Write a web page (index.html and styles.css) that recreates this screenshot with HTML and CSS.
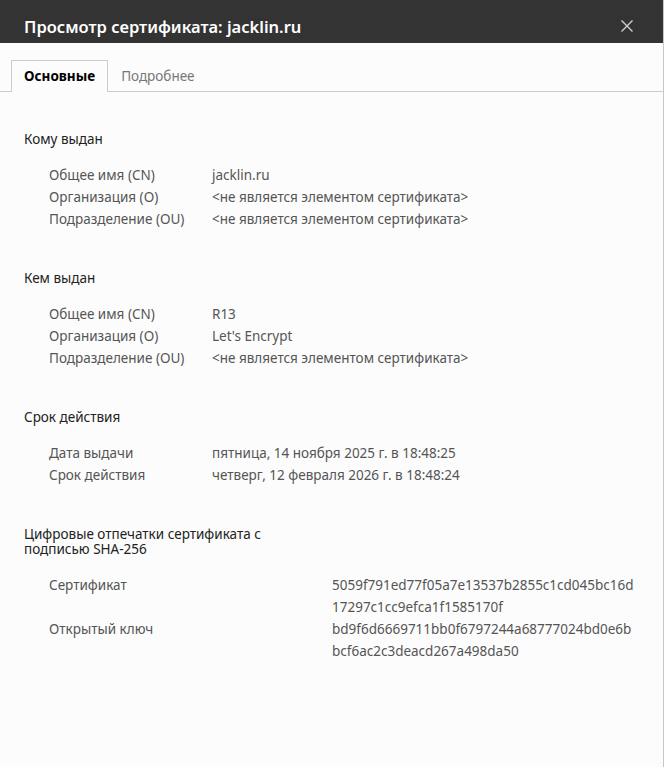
FILE: index.html
```html
<!DOCTYPE html>
<html lang="ru">
<head>
  <meta charset="UTF-8">
  <title>Просмотр сертификата</title>
  <link rel="stylesheet" href="styles.css">
</head>
<body>
  <div class="dialog">
    <div class="titlebar">
      <h1>Просмотр сертификата: jacklin.ru</h1>
      <button class="close" aria-label="Закрыть">
        <svg width="12" height="12" viewBox="0 0 12 12"><path d="M0.5 0.5L11.5 11.5M11.5 0.5L0.5 11.5" stroke="#d0d0d0" stroke-width="1.4" fill="none"/></svg>
      </button>
    </div>
    <div class="tabs">
      <div class="tab active">Основные</div>
      <div class="tab">Подробнее</div>
    </div>
    <div class="content">
      <div class="section">
        <h2>Кому выдан</h2>
        <div class="rows">
          <div class="label">Общее имя (CN)</div><div class="value">jacklin.ru</div>
          <div class="label">Организация (O)</div><div class="value">&lt;не является элементом сертификата&gt;</div>
          <div class="label">Подразделение (OU)</div><div class="value">&lt;не является элементом сертификата&gt;</div>
        </div>
      </div>
      <div class="section">
        <h2>Кем выдан</h2>
        <div class="rows">
          <div class="label">Общее имя (CN)</div><div class="value">R13</div>
          <div class="label">Организация (O)</div><div class="value">Let's Encrypt</div>
          <div class="label">Подразделение (OU)</div><div class="value">&lt;не является элементом сертификата&gt;</div>
        </div>
      </div>
      <div class="section">
        <h2>Срок действия</h2>
        <div class="rows">
          <div class="label">Дата выдачи</div><div class="value">пятница, 14 ноября 2025 г. в 18:48:25</div>
          <div class="label">Срок действия</div><div class="value">четверг, 12 февраля 2026 г. в 18:48:24</div>
        </div>
      </div>
      <div class="section">
        <h2 class="wrap">Цифровые отпечатки сертификата с подписью SHA-256</h2>
        <div class="rows wide">
          <div class="label">Сертификат</div>
          <div class="value"><span>5059f791ed77f05a7e13537b2855c1cd045bc16d</span><span>17297c1cc9efca1f1585170f</span></div>
          <div class="label">Открытый ключ</div>
          <div class="value"><span>bd9f6d6669711bb0f6797244a68777024bd0e6b</span><span>bcf6ac2c3deacd267a498da50</span></div>
        </div>
      </div>
    </div>
  </div>
</body>
</html>
```

FILE: styles.css
```css
* {
  box-sizing: border-box;
  margin: 0;
  padding: 0;
}
body {
  font-family: "Noto Sans", "Open Sans", sans-serif;
  background: #fcfcfc;
  color: #222;
  font-size: 13.5px;
}
.dialog {
  height: 767px;
  border-right: 1px solid #c8c8c8;
}
.titlebar {
  background: #333;
  height: 43px;
  display: flex;
  align-items: center;
  justify-content: space-between;
  padding: 9px 0 0 24px;
}
.titlebar h1 {
  color: #fff;
  font-size: 16.5px;
  font-weight: 600;
}
.close {
  background: none;
  border: none;
  width: 44px;
  height: 30px;
  margin-right: 14px;
  display: flex;
  align-items: center;
  justify-content: center;
}
.tabs {
  display: flex;
  padding: 17px 0 0 11px;
  border-bottom: 1px solid #ccc;
}
.tab {
  height: 31px;
  line-height: 30px;
  padding: 0 12px;
  color: #777;
  border: 1px solid transparent;
  border-bottom: none;
  margin-bottom: -1px;
}
.tab.active {
  color: #000;
  font-weight: 700;
  border-color: #ccc;
  background: #fcfcfc;
  height: 32px;
}
.content {
  padding: 38px 24px 0;
}
.section {
  margin-bottom: 39px;
}
h2 {
  font-size: 13.5px;
  font-weight: 400;
  color: #222;
  line-height: 18px;
  margin-bottom: 16px;
}
h2.wrap {
  max-width: 262px;
  line-height: 15px;
  padding-top: 2px;
  margin-bottom: 17px;
}
.rows {
  display: grid;
  grid-template-columns: 163px 1fr;
  padding-left: 25px;
  line-height: 22px;
  color: #555;
}
.rows.wide {
  grid-template-columns: 283px 1fr;
}
.value span {
  display: block;
}
```
